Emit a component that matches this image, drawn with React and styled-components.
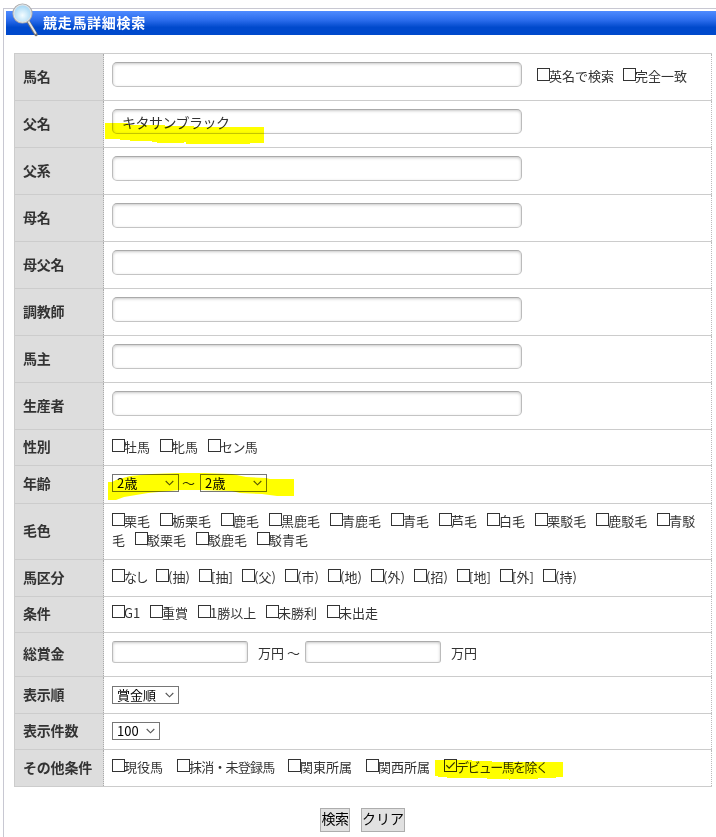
import React from 'react';
import styled, { createGlobalStyle } from 'styled-components';

const GlobalStyle = createGlobalStyle`
  * {
    box-sizing: border-box;
  }
  body {
    margin: 0;
    background: #fff;
    color: #333;
    font-family: 'Noto Sans CJK JP', sans-serif;
    font-size: 13px;
    overflow: hidden;
  }
`;

const Page = styled.div`
  position: relative;
  width: 716px;
  height: 837px;
  padding: 8px 0 0 3px;
  overflow: hidden;
`;

const Panel = styled.div`
  height: 829px;
  padding: 2px 0 0 2px;
  border-top: 1px solid #c8c8d2;
  border-left: 1px solid #c8c8d2;
`;

const Header = styled.h1`
  height: 24px;
  margin: 0 0 18px;
  padding-left: 37px;
  background: linear-gradient(#4f8bff, #2b6cec 38%, #0049cc 68%, #0049cc);
  color: #fff;
  font-size: 14px;
  line-height: 22px;
  letter-spacing: 0.7px;
`;

const Magnifier = styled.svg`
  position: absolute;
  left: 10px;
  top: 0;
`;

const Table = styled.div`
  width: 698px;
  margin-left: 8px;
  border-bottom: 1px solid #ccc;
`;

const Row = styled.div`
  display: flex;
  height: ${({ $h }) => $h}px;
  border-top: 1px solid #ccc;
`;

const Label = styled.div`
  display: flex;
  align-items: center;
  width: 90px;
  padding: 0 0 3px 8px;
  border-left: 1px solid #ccc;
  border-right: 1px dotted #aaa;
  background: #ddd;
  font-size: 14px;
  font-weight: bold;
  line-height: 18px;
  letter-spacing: -0.2px;
`;

const Value = styled.div`
  flex: 1;
  padding: ${({ $top = 8 }) => $top}px 8px 0;
  border-right: 1px dotted #bbb;
  line-height: 19px;
`;

const Line = styled.div`
  display: flex;
`;

const TextInput = styled.input`
  width: ${({ $w = 410 }) => $w}px;
  height: ${({ $h = 25 }) => $h}px;
  padding: 0 9px;
  border: 1px solid #bbb;
  border-color: #aaa #bbb #c4c4c4;
  border-radius: ${({ $r = 5 }) => $r}px;
  background: #fff;
  box-shadow: inset 0 1px 3px rgba(0, 0, 0, 0.22);
  color: #333;
  font: 14px 'Noto Sans CJK JP', sans-serif;
  letter-spacing: -0.5px;
  outline: none;
`;

const Choice = styled.label`
  margin-right: ${({ $gap = 9 }) => $gap + 1}px;
  letter-spacing: ${({ $ls = 0 }) => $ls}px;
`;

const ChoiceText = styled.span`
  display: ${({ $w }) => ($w ? 'inline-block' : 'inline')};
  width: ${({ $w }) => ($w ? `${$w}px` : 'auto')};
  white-space: ${({ $w }) => ($w ? 'nowrap' : 'normal')};
  vertical-align: ${({ $w }) => ($w ? 'top' : 'baseline')};
`;

const Box = styled.span`
  display: inline-block;
  width: 13px;
  height: 13px;
  margin: 2px -1px 0 0;
  border: 1px solid #333;
  vertical-align: top;

  svg {
    display: block;
  }
`;

const MainExtras = styled.div`
  padding: 4px 0 0 15px;
`;

const Select = styled.div`
  display: flex;
  align-items: center;
  justify-content: space-between;
  width: ${({ $w = 67 }) => $w}px;
  height: 18px;
  padding: 0 4px;
  border: 1px solid #767676;
  color: #000;
  line-height: 16px;
  letter-spacing: ${({ $ls = 0 }) => $ls}px;
`;

const Unit = styled.span`
  margin: ${({ $m }) => $m};
  line-height: ${({ $lh = 18 }) => $lh}px;
`;

const Buttons = styled.div`
  display: flex;
  gap: 11px;
  margin: 21px 0 0 314px;
`;

const Button = styled.button`
  width: ${({ $w }) => $w}px;
  height: 24px;
  padding: 0 0 3px;
  border: 1px solid #adadad;
  background: #e1e1e1;
  color: #000;
  font: 14px/19px 'Noto Sans CJK JP', sans-serif;
  letter-spacing: ${({ $ls = 0 }) => $ls}px;
  white-space: nowrap;
`;

const Marker = styled.svg`
  position: absolute;
  left: 0;
  top: 0;
  mix-blend-mode: multiply;
  pointer-events: none;
`;

const coats = ['栗毛', '栃栗毛', '鹿毛', '黒鹿毛', '青鹿毛', '青毛', '芦毛', '白毛', '栗駁毛', '鹿駁毛', '青駁毛', '駁栗毛', '駁鹿毛', '駁青毛'];
const kinds = ['(抽)', '[抽]', '(父)', '(市)', '(地)', '(外)', '(招)', '[地]', '[外]', '(持)'];

function Check({ text, w, gap, ls, checked }) {
  return (
    <Choice $gap={gap} $ls={ls}>
      <Box>
        {checked && (
          <svg width="11" height="11" viewBox="0 0 11 11">
            <path d="M1.3 5.2 4.2 8.1 9.7 2.4" fill="none" stroke="#333" strokeWidth="1.3" />
          </svg>
        )}
      </Box>
      <ChoiceText $w={w}>{text}</ChoiceText>
    </Choice>
  );
}

function Dropdown({ text, w, ls }) {
  return (
    <Select $w={w} $ls={ls}>
      {text}
      <svg width="9" height="6" viewBox="0 0 9 6">
        <path d="M.7 1 4.5 4.8 8.3 1" fill="none" stroke="#555" strokeWidth="1.1" />
      </svg>
    </Select>
  );
}

function Field({ label, h, top, children }) {
  return (
    <Row $h={h}>
      <Label>{label}</Label>
      <Value $top={top}>{children}</Value>
    </Row>
  );
}

function App() {
  return (
    <Page>
      <GlobalStyle />
      <Panel>
        <Header>競走馬詳細検索</Header>
        <Table>
          <Field label="馬名" h={47}>
            <Line>
              <TextInput />
              <MainExtras>
                <Check text="英名で検索" w={64} />
                <Check text="完全一致" />
              </MainExtras>
            </Line>
          </Field>
          <Field label="父名" h={47}>
            <Line><TextInput defaultValue="キタサンブラック" /></Line>
          </Field>
          {['父系', '母名', '母父名', '調教師', '馬主', '生産者'].map((name) => (
            <Field key={name} label={name} h={47}>
              <Line><TextInput /></Line>
            </Field>
          ))}
          <Field label="性別" h={36} top={7}>
            <Check text="牡馬" />
            <Check text="牝馬" />
            <Check text="セン馬" ls={-0.6} />
          </Field>
          <Field label="年齢" h={38}>
            <Line>
              <Dropdown text="2歳" ls={0.3} />
              <Unit $m="0 5px 0 3px">～</Unit>
              <Dropdown text="2歳" ls={0.3} />
            </Line>
          </Field>
          <Field label="毛色" h={56} top={7}>
            {coats.map((coat) => <Check key={coat} text={coat} />)}
          </Field>
          <Field label="馬区分" h={37} top={7}>
            <Check text="なし" w={22} ls={-1.5} />
            {kinds.map((kind) => <Check key={kind} text={kind} w={21} />)}
          </Field>
          <Field label="条件" h={36} top={6}>
            <Check text="G1" w={16} />
            <Check text="重賞" />
            <Check text="1勝以上" w={46} />
            <Check text="未勝利" />
            <Check text="未出走" />
          </Field>
          <Field label="総賞金" h={44}>
            <Line>
              <TextInput $w={136} $h={22} $r={3} />
              <Unit $m="0 3px 0 10px" $lh={23}>万円</Unit>
              <Unit $m="0 5px 0 0" $lh={23}>～</Unit>
              <TextInput $w={136} $h={22} $r={3} />
              <Unit $m="0 0 0 10px" $lh={23}>万円</Unit>
            </Line>
          </Field>
          <Field label="表示順" h={37} top={9}>
            <Dropdown text="賞金順" />
          </Field>
          <Field label="表示件数" h={36}>
            <Dropdown text="100" w={48} />
          </Field>
          <Field label="その他条件" h={37} top={7}>
            <Check text="現役馬" gap={13} />
            <Check text="抹消・未登録馬" w={85} gap={13} ls={-0.8} />
            <Check text="関東所属" gap={13} />
            <Check text="関西所属" gap={13} />
            <Check text="デビュー馬を除く" w={90} ls={-1.6} checked />
          </Field>
        </Table>
        <Buttons>
          <Button $w={30} $ls={-0.5}>検索</Button>
          <Button $w={44}>クリア</Button>
        </Buttons>
      </Panel>
      <Magnifier width="32" height="40" viewBox="0 0 32 40">
        <defs>
          <radialGradient id="lens" cx="50%" cy="60%">
            <stop offset="0" stopColor="#f4fcff" />
            <stop offset="1" stopColor="#a9d9f5" />
          </radialGradient>
        </defs>
        <path d="M18.5 22 26 34.5" stroke="#777" strokeWidth="3.4" strokeLinecap="round" />
        <path d="M18.5 21.5 25.5 33" stroke="#e6e6e6" strokeWidth="1.8" strokeLinecap="round" />
        <circle cx="12.5" cy="13.5" r="9.3" fill="url(#lens)" stroke="#aaa" strokeWidth="1.6" />
        <circle cx="12.5" cy="13.5" r="8.6" fill="none" stroke="#dde4ea" strokeWidth="1.2" />
      </Magnifier>
      <Marker width="716" height="837" viewBox="0 0 716 837" fill="#ff0">
        <path d="M105 123H128V125H165V126H194V127H264V143H250V144H186V142H184V143H157V142H152V141H130V140H120V139H105Z" />
        <path d="M108 482H112L116 480L130 476L152 474L178 473H204L232 474L246 477L266 478L270 479H294V496H277L262 494L240 493L232 491L200 490H180L148 493L124 497L116 500H108Z" />
        <path d="M435 760H472V761H492V762H563V777H556V778H538V779H510V780H509V779H487V778H447V777H438V776H435Z" />
      </Marker>
    </Page>
  );
}

export default App;
